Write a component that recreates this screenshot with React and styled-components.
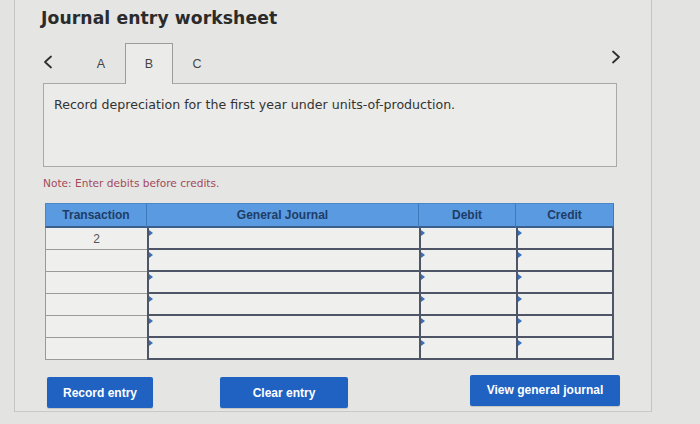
import React from "react";
import styled, { createGlobalStyle } from "styled-components";

const Global = createGlobalStyle`
  html, body { margin: 0; padding: 0; background: #e3e3e1; }
  body { width: 700px; height: 424px; overflow: hidden; font-family: "DejaVu Sans", Verdana, sans-serif; }
`;

const Page = styled.div`
  padding-left: 14px;
  height: 424px;
  box-sizing: border-box;
`;

const Panel = styled.div`
  width: 638px;
  height: 412px;
  box-sizing: border-box;
  border-left: 1px solid #c4c4c2;
  border-right: 1px solid #c4c4c2;
  border-bottom: 1px solid #c9c9c7;
  background: #e5e5e3;
  padding: 7px 0 0 28px;
`;

const Title = styled.h1`
  margin: 0 0 0 -2px;
  font-family: "DejaVu Sans", Verdana, sans-serif;
  font-weight: 700;
  font-size: 17.2px;
  line-height: 22px;
  color: #2b2b2b;
  letter-spacing: 0.1px;
`;

const TabRow = styled.div`
  display: flex;
  align-items: flex-end;
  height: 40px;
  margin-top: 14px;
  width: 580px;
  position: relative;
  z-index: 1;
`;

const ArrowBtn = styled.span`
  display: flex;
  align-self: ${(p) => (p.$right ? "flex-start" : "center")};
  margin-top: ${(p) => (p.$right ? "7px" : "-2px")};
  ${(p) => (p.$right ? "margin-left: auto; margin-right: 2px;" : "margin-left: 0px; margin-right: 24px;")}
  color: #2f2f2f;
`;

const Tab = styled.div`
  width: 48px;
  height: 40px;
  box-sizing: border-box;
  display: flex;
  align-items: center;
  justify-content: center;
  font-family: "Liberation Sans", Arial, sans-serif;
  font-size: 12.5px;
  color: #444;
  border: 1px solid ${(p) => (p.$active ? "#9c9c9a" : "transparent")};
  border-bottom: none;
  background: ${(p) => (p.$active ? "#ebebe9" : "transparent")};
  margin-bottom: ${(p) => (p.$active ? "-1px" : "0")};
  height: ${(p) => (p.$active ? "41px" : "40px")};
`;

const ContentBox = styled.div`
  width: 574px;
  height: 84px;
  box-sizing: border-box;
  border: 1px solid #a9a9a7;
  background: #ebebe9;
  padding: 13px 0 0 10px;
  font-size: 12.6px;
  color: #333;
`;

const Note = styled.div`
  margin-top: 10px;
  font-size: 10.6px;
  color: #a34a5c;
`;

const Table = styled.div`
  margin-top: 14px;
  margin-left: 2px;
  width: 570px;
  display: grid;
  grid-template-columns: 102px 272px 97px 98px;
`;

const Head = styled.div`
  height: 25px;
  box-sizing: border-box;
  background: #5a9ae0;
  border-right: 1px solid #3f78bb;
  border-top: 1px solid #4b86c9;
  border-bottom: 2px solid #3c5e8a;
  display: flex;
  align-items: center;
  justify-content: center;
  font-family: "Liberation Sans", Arial, sans-serif;
  font-weight: 700;
  font-size: 12px;
  color: #1e3d66;
  &:first-child { border-left: 1px solid #4b86c9; }
`;

const TxCell = styled.div`
  height: 22px;
  box-sizing: border-box;
  background: #efefed;
  border-left: 1px solid #9a9a98;
  border-bottom: 1px solid #9a9a98;
  display: flex;
  align-items: center;
  justify-content: center;
  font-family: "Liberation Sans", Arial, sans-serif;
  font-size: 12px;
  color: #555;
`;

const InputCell = styled.div`
  position: relative;
  height: 22px;
  box-sizing: border-box;
  background: #efefed;
  border-left: 2px solid #4d5566;
  border-bottom: 2px solid #4d5566;
  ${(p) => (p.$last ? "border-right: 2px solid #4d5566;" : "")}
  &::before {
    content: "";
    position: absolute;
    left: 0;
    top: 2px;
    border-left: 4px solid #3a6fb8;
    border-top: 3px solid transparent;
    border-bottom: 3px solid transparent;
  }
`;

const ButtonRow = styled.div`
  display: flex;
  align-items: center;
  margin-top: 17px;
  width: 594px;
`;

const Button = styled.button`
  height: 31px;
  width: ${(p) => p.$w}px;
  margin-left: ${(p) => p.$ml}px;
  margin-top: ${(p) => p.$mt || 0}px;
  border: none;
  border-radius: 2px;
  background: #1f62c2;
  color: #fff;
  font-family: "Liberation Sans", Arial, sans-serif;
  font-weight: 700;
  font-size: 12px;
  padding: 0;
  box-shadow: 0 1px 1px rgba(0,0,0,0.15);
`;

const Chevron = ({ dir }) => (
  <svg width="10" height="14" viewBox="0 0 10 14" fill="none" stroke="currentColor" strokeWidth="1.8" strokeLinecap="round" strokeLinejoin="round">
    {dir === "left" ? <path d="M8 1.5 L2 7 L8 12.5" /> : <path d="M2 1.5 L8 7 L2 12.5" />}
  </svg>
);

const rows = ["2", "", "", "", "", ""];

export default function App() {
  return (
    <>
      <Global />
      <Page>
        <Panel>
          <Title>Journal entry worksheet</Title>
          <TabRow>
            <ArrowBtn><Chevron dir="left" /></ArrowBtn>
            <Tab>A</Tab>
            <Tab $active>B</Tab>
            <Tab>C</Tab>
            <ArrowBtn $right><Chevron dir="right" /></ArrowBtn>
          </TabRow>
          <ContentBox>Record depreciation for the first year under units-of-production.</ContentBox>
          <Note>Note: Enter debits before credits.</Note>
          <Table>
            <Head>Transaction</Head>
            <Head>General Journal</Head>
            <Head>Debit</Head>
            <Head>Credit</Head>
            {rows.map((r, i) => (
              <React.Fragment key={i}>
                <TxCell>{r}</TxCell>
                <InputCell />
                <InputCell />
                <InputCell $last />
              </React.Fragment>
            ))}
          </Table>
          <ButtonRow>
            <Button $w={106} $ml={4}>Record entry</Button>
            <Button $w={128} $ml={67}>Clear entry</Button>
            <Button $w={150} $ml={122} $mt={-5}>View general journal</Button>
          </ButtonRow>
        </Panel>
      </Page>
    </>
  );
}
